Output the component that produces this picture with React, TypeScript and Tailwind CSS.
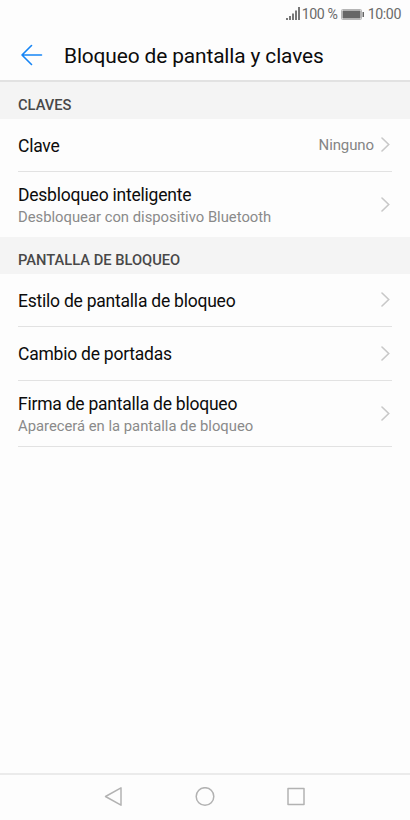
import type { ReactNode } from 'react';

function Chevron() {
  return (
    <svg className="mr-[2px] ml-[7px] h-4 w-[9px] shrink-0" viewBox="0 0 9 16" fill="none" stroke="#c8c8c8" strokeWidth="1.6" strokeLinecap="round">
      <path d="M1 1L7.7 7.5 1 14" />
    </svg>
  );
}

function SectionTitle({ children }: { children: ReactNode }) {
  return (
    <h2 className="flex h-[37px] items-center bg-[#f4f4f4] px-[18px] pt-[9px] text-[14.7px] font-medium text-[#484848]">{children}</h2>
  );
}

interface RowProps {
  title: string;
  subtitle?: string;
  value?: string;
  className: string;
}

function Row({ title, subtitle, value, className }: RowProps) {
  return (
    <div className={`mx-[18px] flex items-center ${className}`}>
      <div className="flex-1 pt-[2px]">
        <div className="text-[17.5px] leading-[23px] tracking-[-0.23px] text-[#0c0c0c]">{title}</div>
        {subtitle && <div className="text-[14.8px] leading-[21px] text-[#8a8a8a]">{subtitle}</div>}
      </div>
      {value && <span className="text-[15px] tracking-[-0.1px] text-[#858585]">{value}</span>}
      <Chevron />
    </div>
  );
}

export default function App() {
  return (
    <div className="flex h-[820px] w-[410px] flex-col bg-[#fdfdfd] font-['Roboto',sans-serif]">
      {/* status bar */}
      <div className="flex h-[28px] items-center justify-end pt-px pr-[9px] text-[14.2px] tracking-[-0.4px] text-[#6a6a6a]">
        <svg className="mr-[2px] mb-[2px] h-[13px] w-[14px]" viewBox="0 0 14 13" fill="#777">
          <path d="M0 11h2v2H0zM3 9h2v4H3zM6 6.5h2V13H6zM9 3.5h2V13H9zM12 0h2v13h-2z" />
        </svg>
        <span className="w-[36px] pt-px whitespace-nowrap">100 %</span>
        <svg className="mr-[4px] mb-px ml-[3px] h-[11px] w-[23px]" viewBox="0 0 23 11">
          <rect x=".5" y=".5" width="20" height="10" rx="1" fill="none" stroke="#b5b5b5" />
          <path d="M1.5 1.5h18v8h-18zM21.5 3H23v5h-1.5z" fill="#666" />
        </svg>
        <span className="pt-px">10:00</span>
      </div>

      {/* app bar */}
      <header className="flex h-[54px] items-center border-b-2 border-[#e2e2e2] pl-[21px]">
        <svg className="mt-px h-[22px] w-[22px]" viewBox="0 0 22 22" fill="none" stroke="#1685f5" strokeWidth="1.6" strokeLinecap="round" strokeLinejoin="round">
          <path d="M20.5 11H1M10.5 1.5L1 11l9.5 9.5" />
        </svg>
        <h1 className="mt-[5px] ml-[21px] text-[20.9px] tracking-[-0.13px] text-[#0c0c0c]">Bloqueo de pantalla y claves</h1>
      </header>

      <main className="flex-1">
        <SectionTitle>CLAVES</SectionTitle>
        <Row title="Clave" value="Ninguno" className="h-[53px] border-b border-[#e2e2e2]" />
        <Row title="Desbloqueo inteligente" subtitle="Desbloquear con dispositivo Bluetooth" className="h-[65px]" />
        <SectionTitle>PANTALLA DE BLOQUEO</SectionTitle>
        <Row title="Estilo de pantalla de bloqueo" className="h-[53px] border-b border-[#e2e2e2]" />
        <Row title="Cambio de portadas" className="h-[54px] border-b border-[#e2e2e2]" />
        <Row title="Firma de pantalla de bloqueo" subtitle="Aparecerá en la pantalla de bloqueo" className="h-[66px] border-b border-[#e2e2e2]" />
      </main>

      {/* navigation bar */}
      <nav className="flex h-[47px] items-center justify-center gap-[71px] border-t-2 border-[#ebebeb]">
        <svg className="mb-px h-5 w-5" viewBox="0 0 20 20" fill="none" stroke="#b2b2b2" strokeWidth="1.5" strokeLinejoin="round">
          <path d="M17 .8v17.4L1.5 9.5z" />
        </svg>
        <svg className="mb-px h-5 w-5" viewBox="0 0 20 20" fill="none" stroke="#b2b2b2" strokeWidth="1.5">
          <circle cx="10" cy="9.5" r="8.8" />
        </svg>
        <svg className="mb-px h-5 w-5" viewBox="0 0 20 20" fill="none" stroke="#b2b2b2" strokeWidth="1.5" strokeLinejoin="round">
          <rect x="2" y="1.5" width="16" height="16" />
        </svg>
      </nav>
    </div>
  );
}
